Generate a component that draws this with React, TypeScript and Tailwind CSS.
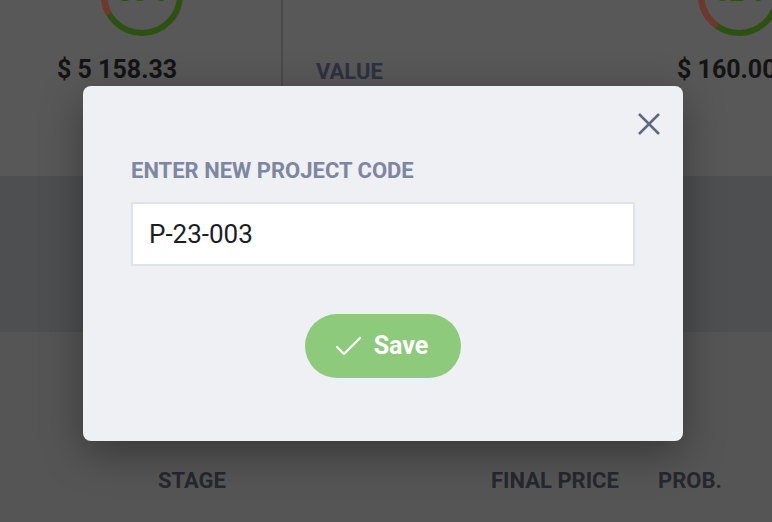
import { useState } from "react";

function Ring({ percent, red, className }: { percent: number; red: [number, number]; className?: string }) {
    // arc drawn as two circle segments: red slice then green remainder
    const r = 38;
    const c = 2 * Math.PI * r;
    const [from, to] = red;
    return (
        <div className={`relative h-[84px] w-[84px] ${className ?? ""}`}>
            <svg width="84" height="84" viewBox="0 0 84 84" className="absolute inset-0">
                <circle cx="42" cy="42" r={r} fill="none" stroke="#58a322" strokeWidth="6" />
                <circle
                    cx="42"
                    cy="42"
                    r={r}
                    fill="none"
                    stroke="#e07058"
                    strokeWidth="6"
                    strokeDasharray={`${((to - from) / 360) * c} ${c}`}
                    transform={`rotate(${from} 42 42)`}
                />
            </svg>
            <div className="absolute inset-x-0 bottom-[32px] text-center text-[26px] font-bold leading-none text-[#58a322]">
                {percent}%
            </div>
        </div>
    );
}

export default function App() {
    const [code, setCode] = useState("P-23-003");

    return (
        <div className="relative h-[522px] w-[772px] overflow-hidden bg-[#aaaaaa] font-['Roboto',sans-serif]">
            {/* summary strip */}
            <div className="flex h-[176px] bg-[#b0b0b0]">
                <div className="w-[283px] shrink-0 border-r-2 border-[#949494]">
                    <Ring percent={85} red={[150, 205]} className="-mt-[47px] ml-[100px]" />
                    <div className="ml-[57px] mt-[18px] text-[25px] font-bold leading-[30px] text-[#282828]">$ 5 158.33</div>
                </div>
                <div className="flex flex-1 justify-between">
                    <div className="ml-[33px] mt-[57px] text-[22px] font-bold leading-[30px] text-[#5c6280]">VALUE</div>
                    <div className="w-[95px] overflow-hidden">
                        <Ring percent={62} red={[125, 245]} className="-mt-[47px] ml-[20px]" />
                        <div className="mt-[18px] whitespace-nowrap text-[25px] font-bold leading-[30px] text-[#282828]">$ 160.00</div>
                    </div>
                </div>
            </div>

            {/* filter band */}
            <div className="h-[156px] bg-[#9c9ea2]" />

            {/* table header */}
            <div className="flex pt-[136px] text-[22px] font-bold leading-[26px] text-[#4e505c]">
                <div className="ml-[158px] w-[333px]">STAGE</div>
                <div className="w-[167px]">FINAL PRICE</div>
                <div>PROB.</div>
            </div>

            {/* dim overlay + dialog */}
            <div className="absolute inset-0 bg-black/50">
                <div className="relative ml-[83px] mt-[86px] h-[355px] w-[600px] rounded-lg bg-[#eff0f4] px-12 pt-[72px] shadow-[0_12px_40px_rgba(0,0,0,0.35)]">
                    <button className="absolute right-[23px] top-[27px] text-[#5f6880]" aria-label="Close">
                        <svg width="22" height="22" viewBox="0 0 22 22" fill="none" stroke="currentColor" strokeWidth="2.5">
                            <path d="M1 1l20 20M21 1 1 21" />
                        </svg>
                    </button>
                    <label className="block text-[22px] font-bold leading-[26px] text-[#7d879f]">ENTER NEW PROJECT CODE</label>
                    <input
                        value={code}
                        onChange={(e) => setCode(e.target.value)}
                        className="mt-[18px] block h-[64px] w-full border-2 border-[#dfe2ea] bg-white pl-[16px] pr-[17px] text-[26px] text-[#1b1e25] outline-none"
                    />
                    <div className="mt-[48px] flex justify-center">
                        <button className="flex h-[64px] w-[156px] items-center justify-center gap-[12px] rounded-full bg-[#8dca7c] pr-[3px] text-[25px] font-bold text-white">
                            <svg width="27" height="20" viewBox="0 0 27 20" fill="none" stroke="currentColor" strokeWidth="2.2" strokeLinecap="round" strokeLinejoin="round">
                                <path d="M2 11l7 7L25 2" />
                            </svg>
                            Save
                        </button>
                    </div>
                </div>
            </div>
        </div>
    );
}
